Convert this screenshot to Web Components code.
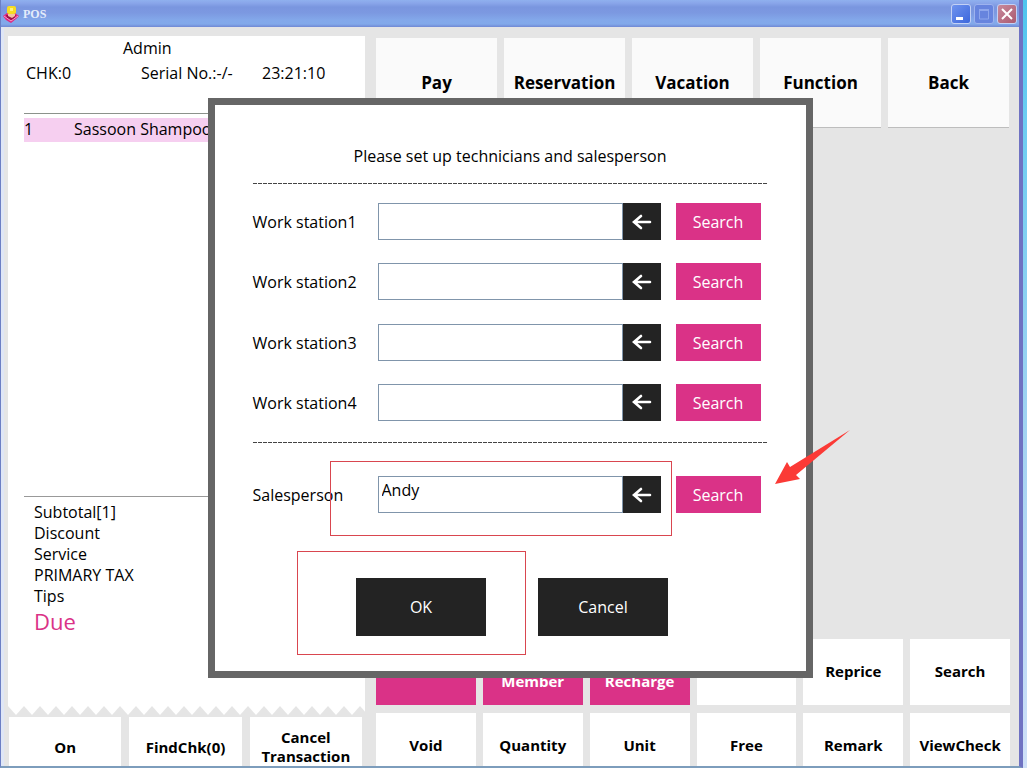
<!DOCTYPE html>
<html lang="en">
<head>
<meta charset="utf-8">
<meta name="viewport" content="width=device-width, initial-scale=1">
<title>POS</title>
<style>
    :root {
        --pink: #da3287;
        --dark: #232323;
        --grey: #e5e5e5;
        --frame: #666666;
    }

    body {
        margin: 0;
        height: 100vh;
        overflow: hidden;
        background: linear-gradient(#4fc4ee 0%, #6ccdf2 15%, #a8d4f2 60%, #cfe0f8 100%);
        font: 16px/21px "Open Sans", "Noto Sans", sans-serif;
        color: #000;
    }
</style>
</head>
<body>
<pos-app></pos-app>

<script>
class PosTitlebar extends HTMLElement {
    connectedCallback() {
        this.attachShadow({ mode: 'open' });
        this.shadowRoot.innerHTML = `
            <style>
                :host {
                    display: flex;
                    align-items: center;
                    height: 27px;
                    box-sizing: border-box;
                    padding: 0 2px 0 1px;
                    gap: 3px;
                    background: linear-gradient(#8fb0ee 0, #8aa6ea 3px, #7a96df 7px, #7c99e1 13px, #83a8ea 20px, #82a9ea 24px, #7088d4 27px);
                }
                h1 {
                    flex: 1;
                    margin: 0;
                    font: bold 12px/16px "Liberation Serif", serif;
                    color: #e4ecfb;
                }
                .controls { display: flex; gap: 3px; }
                button {
                    width: 20px;
                    height: 20px;
                    padding: 0;
                    border: 1px solid #c3d1f5;
                    border-radius: 3px;
                    background: linear-gradient(135deg, #6f93ee, #3c67dc);
                }
                button.max { background: #6784de; border-color: #9db2ee; }
                button.close { background: linear-gradient(135deg, #c88a9c, #ab5a70); }
                svg { display: block; }
            </style>
            <svg class="logo" width="18" height="18" viewBox="0 0 18 18" aria-hidden="true">
                <path d="M1 11l4-3h8l4 3-3 3-5 4-5-3z" fill="#e0257f"/>
                <path d="M4 10h10l-2 4-3 1-4-2z" fill="#9c1145"/>
                <path d="M2 11l7 5 7-5" fill="none" stroke="#f49ac6"/>
                <rect x="5" y="1" width="9" height="8" rx="2" fill="#f6dc22"/>
                <path d="M8 3h3v3H8z" fill="#fff27c"/>
                <path d="M6 9h7v2l-3 2-4-2z" fill="#f3c3a0"/>
            </svg>
            <h1>POS</h1>
            <div class="controls">
                <button aria-label="Minimize"><svg width="18" height="18"><path d="M4 12h7v3H4z" fill="#fff"/></svg></button>
                <button class="max" aria-label="Maximize"><svg width="18" height="18"><path d="M4.5 5v9h9V5z" fill="none" stroke="#8ea6ec"/><path d="M4 5h10" stroke="#8ea6ec" stroke-width="2"/></svg></button>
                <button class="close" aria-label="Close"><svg width="18" height="18"><path d="M4 4l10 10M14 4L4 14" stroke="#fff" stroke-width="2"/></svg></button>
            </div>
        `;
    }
}

class PadButton extends HTMLElement {
    connectedCallback() {
        this.attachShadow({ mode: 'open' });
        this.shadowRoot.innerHTML = `
            <style>
                :host { display: block; min-width: 0; }
                button {
                    display: block;
                    width: 100%;
                    height: 100%;
                    padding: 0 0 2px;
                    border: 0;
                    background: #fff;
                    color: #000;
                    font: bold 15px/19px "Open Sans", "Noto Sans", sans-serif;
                }
                :host([kind="top"]) button {
                    padding: 0;
                    background: #fafafa;
                    border-bottom: 1px solid #bdbdbd;
                    font-size: 17px;
                }
                :host([kind="pink"]) button { padding: 0; background: var(--pink); color: #fff; }
            </style>
            <button><slot></slot></button>
        `;
    }
}

class ReceiptPanel extends HTMLElement {
    connectedCallback() {
        this.attachShadow({ mode: 'open' });
        this.shadowRoot.innerHTML = `
            <style>
                :host { display: flex; flex-direction: column; min-height: 0; }
                .paper {
                    flex: 1;
                    min-height: 0;
                    display: flex;
                    flex-direction: column;
                    box-sizing: border-box;
                    padding: 2px 16px 0;
                    background: #fff;
                }
                .user { padding-left: 99px; }
                .meta { display: flex; padding: 4px 0 29px 2px; }
                .meta span:nth-child(1) { width: 115px; }
                .meta span:nth-child(2) { width: 121px; }
                .items {
                    flex: 1;
                    margin: 0;
                    padding: 4px 0 0;
                    border-top: 1px solid #8c928c;
                    list-style: none;
                }
                .items li { display: flex; padding-bottom: 2px; background: #f6cff0; line-height: 22px; }
                .items span { width: 50px; }
                .totals {
                    margin: 0;
                    padding: 5px 10px 70px;
                    border-top: 1px solid #999;
                    list-style: none;
                }
                .due { font-size: 22px; line-height: 29px; color: var(--pink); }
                .edge { display: block; width: 100%; height: 10px; }
            </style>
            <div class="paper">
                <div class="user">Admin</div>
                <div class="meta"><span>CHK:0</span><span>Serial No.:-/-</span><span>23:21:10</span></div>
                <ul class="items">
                    <li><span>1</span>Sassoon Shampoo</li>
                </ul>
                <ul class="totals">
                    <li>Subtotal[1]</li>
                    <li>Discount</li>
                    <li>Service</li>
                    <li>PRIMARY TAX</li>
                    <li>Tips</li>
                    <li class="due">Due</li>
                </ul>
            </div>
            <svg class="edge" aria-hidden="true">
                <defs>
                    <pattern id="teeth" width="16" height="10" patternUnits="userSpaceOnUse">
                        <path d="M0 0h16L8 9z" fill="#fff"/>
                    </pattern>
                </defs>
                <rect width="100%" height="10" fill="url(#teeth)"/>
            </svg>
        `;
    }
}

class StaffRow extends HTMLElement {
    connectedCallback() {
        const label = this.getAttribute('label');
        const value = this.getAttribute('value') || '';
        this.attachShadow({ mode: 'open' });
        this.shadowRoot.innerHTML = `
            <style>
                :host { display: flex; height: 37px; padding-right: 7px; }
                label { width: 125px; line-height: 39px; white-space: nowrap; }
                input {
                    flex: 1;
                    min-width: 0;
                    box-sizing: border-box;
                    margin: 0;
                    padding: 0 3px 8px;
                    border: 1px solid #8095ab;
                    background: #fff;
                    color: #000;
                    font: inherit;
                    outline: 0;
                }
                button { border: 0; padding: 0; color: #fff; font: inherit; }
                .back { width: 38px; background: var(--dark); }
                .back svg { display: block; margin: 0 auto; }
                .search { width: 85px; margin-left: 15px; padding-top: 2px; background: var(--pink); }
            </style>
            <label for="name">${label}</label>
            <input id="name" type="text" value="${value}">
            <button class="back" aria-label="Clear">
                <svg width="20" height="18" viewBox="0 0 20 18"><path d="M18 9H3M9 3L2 9l7 6" fill="none" stroke="#fff" stroke-width="2.6" stroke-linecap="round"/></svg>
            </button>
            <button class="search">Search</button>
        `;
    }
}

class SetupDialog extends HTMLElement {
    connectedCallback() {
        this.attachShadow({ mode: 'open' });
        this.shadowRoot.innerHTML = `
            <style>
                :host {
                    display: block;
                    position: relative;
                    box-sizing: border-box;
                    width: 605px;
                    max-width: 100%;
                    padding: 39px 38px 35px;
                    border: 7px solid var(--frame);
                    background: #fff;
                }
                h2 { margin: 0 0 15px; font-size: 16px; font-weight: normal; line-height: 24px; text-align: center; }
                .rule { height: 1px; background: repeating-linear-gradient(90deg, #444 0 4px, transparent 4px 5px); }
                .rows {
                    display: flex;
                    flex-direction: column;
                    justify-content: space-between;
                    min-height: 218px;
                    padding: 19px 0 21px;
                }
                .sales { padding: 33px 0 65px; }
                .actions { display: flex; justify-content: center; gap: 52px; padding-left: 4px; }
                .actions button {
                    width: 130px;
                    height: 58px;
                    border: 0;
                    background: var(--dark);
                    color: #fff;
                    font: inherit;
                }
                /* marks drawn over the dialog */
                .mark { position: absolute; box-sizing: border-box; border: 1px solid #d9464f; pointer-events: none; }
                .mark.field { left: 115px; top: 356px; width: 342px; height: 75px; }
                .mark.ok { left: 82px; top: 446px; width: 229px; height: 104px; }
                .pointer { position: absolute; left: 560px; top: 324px; pointer-events: none; }
            </style>
            <h2>Please set up technicians and salesperson</h2>
            <div class="rule"></div>
            <div class="rows">
                <staff-row label="Work station1"></staff-row>
                <staff-row label="Work station2"></staff-row>
                <staff-row label="Work station3"></staff-row>
                <staff-row label="Work station4"></staff-row>
            </div>
            <div class="rule"></div>
            <div class="sales"><staff-row label="Salesperson" value="Andy"></staff-row></div>
            <div class="actions">
                <button>OK</button>
                <button>Cancel</button>
            </div>
            <div class="mark field"></div>
            <div class="mark ok"></div>
            <svg class="pointer" width="76" height="56" viewBox="0 0 76 56" aria-hidden="true">
                <path d="M0 55L12 33l3 5L75 1 21 46l4 4z" fill="#fb3a36"/>
            </svg>
        `;
    }
}

class PosApp extends HTMLElement {
    connectedCallback() {
        this.attachShadow({ mode: 'open' });
        this.shadowRoot.innerHTML = `
            <style>
                :host {
                    display: flex;
                    flex-direction: column;
                    position: relative;
                    height: 100vh;
                    margin-right: 4px;
                    box-sizing: border-box;
                    border: solid #6c7fc4;
                    border-width: 0 4px 2px 1px;
                    border-right-color: #6f72c2;
                    border-bottom-color: #7d9dbc;
                    overflow: hidden;
                }
                .work {
                    flex: 1;
                    min-height: 0;
                    overflow: hidden;
                    background: linear-gradient(90deg, #dfe6f6 3px, var(--grey) 3px);
                }
                /* the last row of keys runs below the window edge */
                .columns {
                    display: grid;
                    grid-template-columns: 357fr 634fr;
                    gap: 11px;
                    box-sizing: border-box;
                    height: calc(100% + 13px);
                    padding: 9px 9px 0 7px;
                }
                .left, .right { display: flex; flex-direction: column; min-width: 0; min-height: 0; }
                receipt-panel { flex: 1; }
                .keys { display: grid; grid-template-columns: repeat(3, 1fr); gap: 8px; height: 62px; padding: 1px 3px 0 1px; }
                .right { justify-content: space-between; }
                .top { display: grid; grid-template-columns: repeat(5, 1fr); gap: 7px; height: 90px; padding: 2px 1px 0 0; }
                .pad { display: grid; grid-template: 66px 66px / repeat(6, 1fr); gap: 8px 7px; }
                .overlay {
                    position: absolute;
                    inset: 0;
                    display: flex;
                    align-items: center;
                    justify-content: center;
                    padding-top: 10px;
                    pointer-events: none;
                }
                setup-dialog { pointer-events: auto; }
            </style>
            <pos-titlebar></pos-titlebar>
            <div class="work">
                <div class="columns">
                    <div class="left">
                        <receipt-panel></receipt-panel>
                        <div class="keys">
                            <pad-button>On</pad-button>
                            <pad-button>FindChk(0)</pad-button>
                            <pad-button>Cancel<br>Transaction</pad-button>
                        </div>
                    </div>
                    <div class="right">
                        <div class="top">
                            <pad-button kind="top">Pay</pad-button>
                            <pad-button kind="top">Reservation</pad-button>
                            <pad-button kind="top">Vacation</pad-button>
                            <pad-button kind="top">Function</pad-button>
                            <pad-button kind="top">Back</pad-button>
                        </div>
                        <div class="pad">
                            <pad-button kind="pink"></pad-button>
                            <pad-button kind="pink"><br>Member</pad-button>
                            <pad-button kind="pink"><br>Recharge</pad-button>
                            <pad-button></pad-button>
                            <pad-button>Reprice</pad-button>
                            <pad-button>Search</pad-button>
                            <pad-button>Void</pad-button>
                            <pad-button>Quantity</pad-button>
                            <pad-button>Unit</pad-button>
                            <pad-button>Free</pad-button>
                            <pad-button>Remark</pad-button>
                            <pad-button>ViewCheck</pad-button>
                        </div>
                    </div>
                </div>
            </div>
            <div class="overlay"><setup-dialog></setup-dialog></div>
        `;
    }
}

customElements.define('pos-titlebar', PosTitlebar);
customElements.define('pad-button', PadButton);
customElements.define('receipt-panel', ReceiptPanel);
customElements.define('staff-row', StaffRow);
customElements.define('setup-dialog', SetupDialog);
customElements.define('pos-app', PosApp);
</script>
</body>
</html>
